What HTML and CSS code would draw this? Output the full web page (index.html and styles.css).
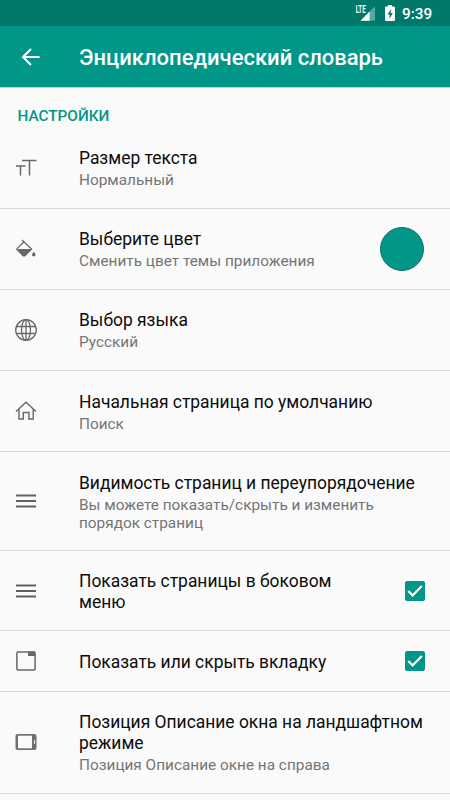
FILE: index.html
```html
<!DOCTYPE html>
<html lang="ru">
<head>
<meta charset="utf-8">
<meta name="viewport" content="width=device-width, initial-scale=1">
<title>Энциклопедический словарь</title>
<link rel="stylesheet" href="styles.css">
</head>
<body>
<div class="screen">
  <div class="status">
    <svg class="signal" width="21" height="22" viewBox="0 0 21 22">
      <path d="M5.500 18.700L20 4.200V18.700Z" fill="#fff" fill-opacity=".35"/>
      <path d="M5.500 18.700L14.600 9.600V18.700Z" fill="#fff"/>
      <text class="lte" x="0.7" y="10.7" textLength="10" lengthAdjust="spacingAndGlyphs">LTE</text>
    </svg>
    <svg class="battery" width="10" height="16" viewBox="0 0 10 16">
      <path d="M3 0h4v1.600h1.800q1.200 0 1.200 1.200v12q0 1.200-1.200 1.200H1.200Q0 16 0 14.800v-12Q0 1.600 1.200 1.600H3Z" fill="#fff"/>
      <path d="M6.300 4L2.500 9.500H4.600V13.700L7.800 8H5.700Z" fill="#00796b"/>
    </svg>
    <span class="time">9:39</span>
  </div>
  <header class="appbar">
    <svg class="back" width="20" height="20" viewBox="0 0 20 20"><path d="M18.500 10H2.500M10 2L2 10L10 18" fill="none" stroke="#fff" stroke-width="2.100"/></svg>
    <h1>Энциклопедический словарь</h1>
  </header>
  <h2>НАСТРОЙКИ</h2>
  <main>
    <section class="row">
      <svg class="icon" width="24" height="24" viewBox="0 0 24 24"><path d="M8 4.500H22.500M15.500 4.500V19.500M2 10H11.500M6.500 10V19.500" fill="none" stroke="#686868" stroke-width="1.500"/></svg>
      <div class="copy"><div class="title">Размер текста</div><div class="sub">Нормальный</div></div>
    </section>
    <section class="row">
      <svg class="icon" width="24" height="24" viewBox="0 0 24 24"><path d="M8 3L17.600 12L11 18.600Q10 19.500 9 18.600L3 12.700Q2.600 12 3.200 11.400L9.800 5" fill="none" stroke="#686868" stroke-width="1.300"/><path d="M3 12.100H17.400L11 18.700Q10 19.500 9 18.700Z" fill="#686868"/><path d="M19.800 14.700Q18 16.800 18 17.700A1.800 1.800 0 0 0 21.600 17.700Q21.600 16.800 19.800 14.700Z" fill="#686868"/></svg>
      <div class="copy"><div class="title">Выберите цвет</div><div class="sub">Сменить цвет темы приложения</div></div>
      <span class="swatch"></span>
    </section>
    <section class="row">
      <svg class="icon" width="24" height="24" viewBox="0 0 24 24"><g fill="none" stroke="#686868" stroke-width="1.300"><circle cx="12" cy="12" r="10.300"/><ellipse cx="12" cy="12" rx="4.500" ry="10.300"/><path d="M12 1.700V22.300M3 8.500H21M3 15.500H21"/></g></svg>
      <div class="copy"><div class="title">Выбор языка</div><div class="sub">Русский</div></div>
    </section>
    <section class="row">
      <svg class="icon" width="24" height="24" viewBox="0 0 24 24"><path d="M2 12.500L12 3.200L22 12.500M5 10.500V20H9.300V13.500H14.900V20H19.200V10.500" fill="none" stroke="#686868" stroke-width="1.400"/></svg>
      <div class="copy"><div class="title">Начальная страница по умолчанию</div><div class="sub">Поиск</div></div>
    </section>
    <section class="row tall">
      <svg class="icon" width="24" height="24" viewBox="0 0 24 24"><path d="M2 6.500H22M2 12H22M2 17.500H22" stroke="#606060" stroke-width="1.800"/></svg>
      <div class="copy"><div class="title">Видимость страниц и переупорядочение</div><div class="sub">Вы можете показать/скрыть и изменить<br>порядок страниц</div></div>
    </section>
    <section class="row drawer">
      <svg class="icon" width="24" height="24" viewBox="0 0 24 24"><path d="M2 6.500H22M2 12H22M2 17.500H22" stroke="#606060" stroke-width="1.800"/></svg>
      <div class="copy"><div class="title">Показать страницы в боковом<br>меню</div></div>
      <svg class="check" width="20" height="20" viewBox="0 0 20 20"><rect width="20" height="20" rx="2" fill="#009688"/><path d="M3.200 10L7.600 14.400L16.800 5" fill="none" stroke="#fff" stroke-width="2.200"/></svg>
    </section>
    <section class="row short">
      <svg class="icon" width="24" height="24" viewBox="0 0 24 24"><rect x="2.900" y="2.900" width="18.200" height="18" rx="1" fill="none" stroke="#686868" stroke-width="1.500"/><path d="M14 2.500H21V7H14Z" fill="#686868"/></svg>
      <div class="copy"><div class="title">Показать или скрыть вкладку</div></div>
      <svg class="check" width="20" height="20" viewBox="0 0 20 20"><rect width="20" height="20" rx="2" fill="#009688"/><path d="M3.200 10L7.600 14.400L16.800 5" fill="none" stroke="#fff" stroke-width="2.200"/></svg>
    </section>
    <section class="row last">
      <svg class="icon" width="24" height="24" viewBox="0 0 24 24"><rect x="1.500" y="4" width="21" height="16" rx="2" fill="#707070"/><path d="M4 5.700H18V18.300H4Z" fill="#fafafa"/><path d="M20.500 10.300V13.800" stroke="#fafafa" stroke-width="1"/></svg>
      <div class="copy"><div class="title">Позиция Описание окна на ландшафтном<br>режиме</div><div class="sub">Позиция Описание окне на справа</div></div>
    </section>
  </main>
</div>
</body>
</html>
```
FILE: styles.css
```css
* { box-sizing: border-box; }
body { margin: 0; background: #fafafa; font-family: Roboto, "Noto Sans", sans-serif; color: #0c0c0c; }
.screen { width: 450px; height: 800px; overflow: hidden; background: #fafafa; }
.status { height: 26px; background: #00796b; display: flex; align-items: center; padding-left: 355px; }
.signal { flex: none; }
.lte { font: 700 10.5px Roboto, sans-serif; fill: #fff; }
.battery { margin-left: 9px; flex: none; }
.time { margin: 2px 0 0 7px; color: #fff; font-size: 15.3px; font-weight: 500; line-height: 26px; white-space: nowrap; }
.appbar { height: 61px; background: #009688; display: flex; align-items: center; padding: 1px 0 0 21px; box-shadow: 0 1px 0 #c2d0ce; }
.back { margin-right: 38px; flex: none; }
h1 { margin: 2px 0 0; color: #fff; font-size: 22px; line-height: 26px; font-weight: 500; white-space: nowrap; }
h2 { margin: 0; padding: 20px 0 0 17.5px; height: 40.500px; font-size: 15.3px; line-height: 18px; font-weight: 500; color: #009688; }
.row { height: 81.200px; display: flex; align-items: center; border-bottom: 1px solid #d9d9d9; padding: 0 25px 0 14px; }
.tall { height: 99px; }
.drawer { height: 80.100px; }
.short { height: 60.200px; }
.last { height: 102.300px; }
.icon { flex: none; margin-right: 41px; }
.copy { flex: 1; white-space: nowrap; padding-top: 2px; }
.title { font-size: 17.43px; line-height: 20.500px; }
.sub { font-size: 15.36px; line-height: 18px; color: #757575; margin-top: 2.500px; }
.swatch { width: 44px; height: 44px; border-radius: 50%; background: #009688; border: 1px solid #167168; margin-right: 1px; }
.check { flex: none; }
```
